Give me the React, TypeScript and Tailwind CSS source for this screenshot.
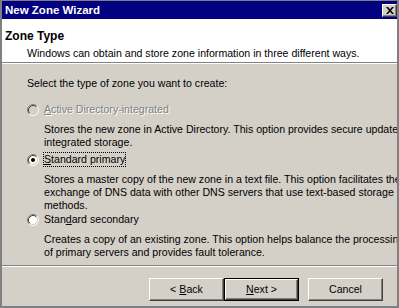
import React from "react";

function Radio({ checked = false, disabled = false }: { checked?: boolean; disabled?: boolean }) {
  return (
    <svg width="12" height="12" viewBox="0 0 12 12" className="shrink-0 block">
      <circle cx="6" cy="6" r="4.5" fill={disabled ? "#D4D0C8" : "#FFFFFF"} />
      <path d="M2.11 9.89 A5.5 5.5 0 0 1 9.89 2.11" fill="none" stroke="#808080" strokeWidth="1" />
      <path d="M9.89 2.11 A5.5 5.5 0 0 1 2.11 9.89" fill="none" stroke="#FFFFFF" strokeWidth="1" />
      <path d="M2.82 9.18 A4.5 4.5 0 0 1 9.18 2.82" fill="none" stroke="#404040" strokeWidth="1" />
      <path d="M9.18 2.82 A4.5 4.5 0 0 1 2.82 9.18" fill="none" stroke="#D4D0C8" strokeWidth="1" />
      {checked && <circle cx="6" cy="6" r="2" fill={disabled ? "#808080" : "#000000"} />}
    </svg>
  );
}

function Button({ children, isDefault = false }: { children: React.ReactNode; isDefault?: boolean }) {
  if (isDefault) {
    return (
      <div className="w-[75px] h-[23px] border border-black flex">
        <div className="flex-1 border border-t-white border-l-white border-r-[#404040] border-b-[#404040] shadow-[inset_-1px_-1px_0_#808080] flex items-center justify-center leading-[13px]">
          {children}
        </div>
      </div>
    );
  }
  return (
    <div className="w-[75px] h-[23px] border border-t-white border-l-white border-r-[#404040] border-b-[#404040] shadow-[inset_-1px_-1px_0_#808080] flex items-center justify-center leading-[13px]">
      {children}
    </div>
  );
}

export default function App() {
  return (
    <div className="w-[399px] h-[308px] overflow-hidden bg-[#D4D0C8] flex flex-col border-t border-x-2 border-b-2 border-[#808080] text-black font-['Liberation_Sans',Arial,sans-serif] text-[10.6px] leading-[13px]">
      {/* Title bar */}
      <div className="h-[18px] shrink-0 bg-[#000080] flex items-center justify-between pl-[3px] pr-[0px]">
        <span className="text-white font-bold text-[11.5px] leading-[13px]">New Zone Wizard</span>
        <div className="w-[15px] h-[13px] bg-[#D4D0C8] border border-t-white border-l-white border-r-[#404040] border-b-[#404040] shadow-[inset_-1px_-1px_0_#808080] flex items-center justify-center">
          <svg width="8" height="7" viewBox="0 0 8 7" className="block">
            <path d="M0 0h2l2 2.2 2-2.2h2L5 3.5 8 7H6L4 4.8 2 7H0l3-3.5z" fill="#000" />
          </svg>
        </div>
      </div>

      {/* Header */}
      <div className="h-[43px] shrink-0 bg-white pl-[3px] pt-[11px]">
        <div className="font-bold text-[12px] leading-[13px]">Zone Type</div>
        <div className="mt-[4px] ml-[22px] whitespace-nowrap">
          Windows can obtain and store zone information in three different ways.
        </div>
      </div>
      <div className="h-[2px] shrink-0 border-t border-t-[#808080] border-b border-b-white" />

      {/* Body */}
      <div className="flex-1 pl-[25px] pt-[13px] whitespace-nowrap overflow-hidden">
        <div>Select the type of zone you want to create:</div>

        <div className="mt-[12px] flex items-center h-[15px] gap-[4px]">
          <Radio disabled />
          <span className="border border-transparent px-0 text-[#808080] [text-shadow:1px_1px_0_#ffffff]">
            <span className="underline">A</span>ctive Directory-integrated
          </span>
        </div>
        <div className="mt-[6px] ml-[17px]">
          <div>Stores the new zone in Active Directory. This option provides secure update</div>
          <div>integrated storage.</div>
        </div>

        <div className="mt-[3px] flex items-center h-[15px] gap-[4px]">
          <Radio checked />
          <span className="border border-dotted border-black">
            <span className="underline">S</span>tandard primary
          </span>
        </div>
        <div className="mt-[6px] ml-[17px]">
          <div>Stores a master copy of the new zone in a text file. This option facilitates the</div>
          <div>exchange of DNS data with other DNS servers that use text-based storage</div>
          <div>methods.</div>
        </div>

        <div className="mt-[0px] flex items-center h-[15px] gap-[4px]">
          <Radio />
          <span className="border border-transparent">
            Stan<span className="underline">d</span>ard secondary
          </span>
        </div>
        <div className="mt-[6px] ml-[17px]">
          <div>Creates a copy of an existing zone. This option helps balance the processing</div>
          <div>of primary servers and provides fault tolerance.</div>
        </div>
      </div>

      <div className="h-[2px] shrink-0 border-t border-t-[#808080] border-b border-b-white" />

      {/* Buttons */}
      <div className="h-[39px] shrink-0 pt-[11px] pr-[14px] flex justify-end items-start">
        <Button>
          &lt; <span className="underline ml-[3px]">B</span>ack
        </Button>
        <Button isDefault>
          <span className="underline">N</span>ext &gt;
        </Button>
        <div className="w-[9px]" />
        <Button>Cancel</Button>
      </div>
    </div>
  );
}
